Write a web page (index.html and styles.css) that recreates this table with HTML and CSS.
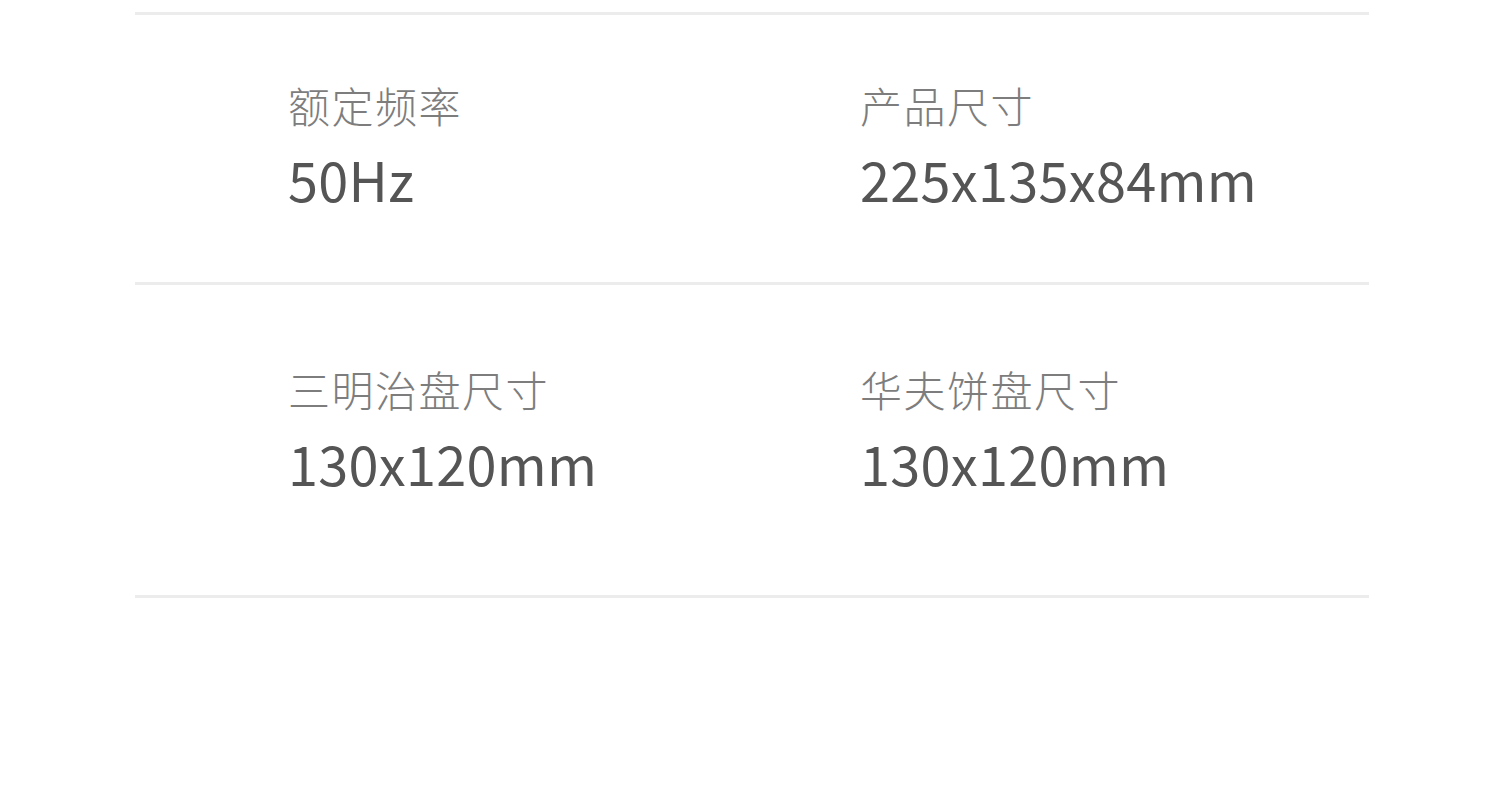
FILE: index.html
```html
<!DOCTYPE html>
<html>
<head>
    <title>产品参数</title>
    <link rel="stylesheet" href="styles.css">
</head>
<body>
    <div class="specs">
        <div class="spec-row first">
            <div class="spec">
                <p class="label">额定频率</p>
                <p class="value">50Hz</p>
            </div>
            <div class="spec">
                <p class="label">产品尺寸</p>
                <p class="value">225x135x84mm</p>
            </div>
        </div>
        <div class="spec-row second">
            <div class="spec">
                <p class="label">三明治盘尺寸</p>
                <p class="value">130x120mm</p>
            </div>
            <div class="spec">
                <p class="label">华夫饼盘尺寸</p>
                <p class="value">130x120mm</p>
            </div>
        </div>
        <div class="spec-end"></div>
    </div>
</body>
</html>
```
FILE: styles.css
```css
body {
    margin: 0;
    padding: 0;
    background: #fff;
    font-family: "Noto Sans CJK SC", "Noto Sans", sans-serif;
}

.specs {
    width: 1234px;
    margin-left: 135px;
    padding-top: 12px;
}

.spec-row {
    display: grid;
    grid-template-columns: 572px 1fr;
    padding-left: 153px;
    border-top: 3px solid #ececec;
    box-sizing: border-box;
}

.spec-row.first {
    padding-top: 69px;
    height: 270px;
}

.spec-row.second {
    padding-top: 83px;
    height: 313px;
}

.spec-end {
    border-top: 3px solid #ececec;
}

.spec p {
    margin: 0;
}

.label {
    font-size: 42px;
    font-weight: 300;
    line-height: 1;
    letter-spacing: 1.5px;
    color: #7d7d7d;
}

.value {
    margin-top: 26px !important;
    font-size: 54px;
    font-weight: 400;
    line-height: 1;
    letter-spacing: 0.3px;
    color: #555;
}
```
